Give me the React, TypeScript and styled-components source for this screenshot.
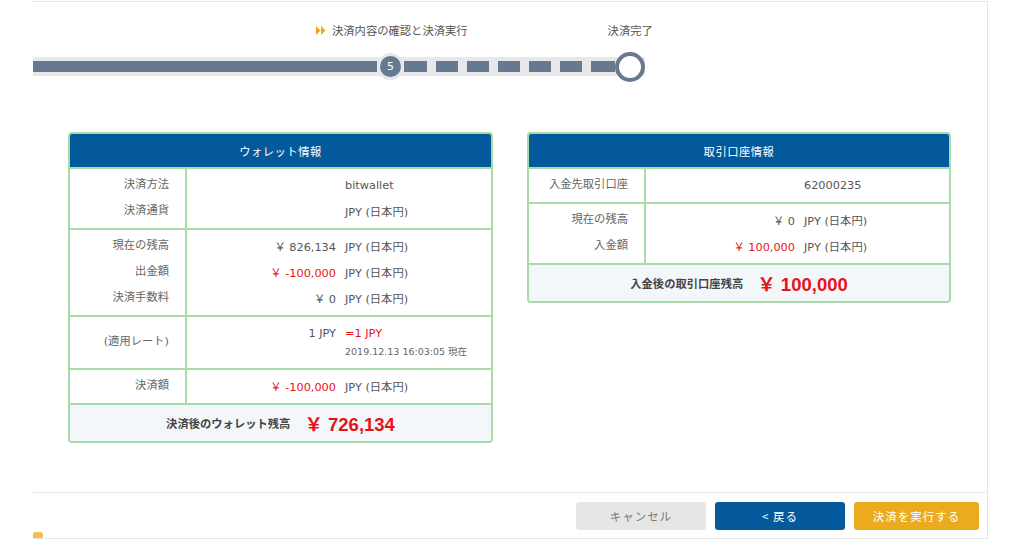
import styled, { createGlobalStyle } from "styled-components";

const GlobalStyle = createGlobalStyle`
    html, body {
        margin: 0;
        padding: 0;
        background: #ffffff;
    }
    body {
        font-family: "DejaVu Sans", "Noto Sans CJK JP", sans-serif;
        color: #555;
    }
`;

type Line = { amount?: string; unit: string; red?: boolean; unitRed?: boolean; note?: string };
type Section = { label: string[]; lines: Line[]; rate?: boolean };

const walletSections: Section[] = [
    {
        label: ["決済方法", "決済通貨"],
        lines: [{ unit: "bitwallet" }, { unit: "JPY (日本円)" }],
    },
    {
        label: ["現在の残高", "出金額", "決済手数料"],
        lines: [
            { amount: "￥ 826,134", unit: "JPY (日本円)" },
            { amount: "￥ -100,000", unit: "JPY (日本円)", red: true },
            { amount: "￥ 0", unit: "JPY (日本円)" },
        ],
    },
    {
        label: ["(適用レート)"],
        rate: true,
        lines: [{ amount: "1 JPY", unit: "=1 JPY", unitRed: true, note: "2019.12.13 16:03:05 現在" }],
    },
    {
        label: ["決済額"],
        lines: [{ amount: "￥ -100,000", unit: "JPY (日本円)", red: true }],
    },
];

const accountSections: Section[] = [
    {
        label: ["入金先取引口座"],
        lines: [{ unit: "62000235" }],
    },
    {
        label: ["現在の残高", "入金額"],
        lines: [
            { amount: "￥ 0", unit: "JPY (日本円)" },
            { amount: "￥ 100,000", unit: "JPY (日本円)", red: true },
        ],
    },
];

function InfoCard({
    title,
    sections,
    totalLabel,
    total,
    width,
}: {
    title: string;
    sections: Section[];
    totalLabel: string;
    total: string;
    width: number;
}) {
    return (
        <Card $width={width}>
            <CardHeader>{title}</CardHeader>
            {sections.map((s, i) => (
                <SectionRow key={i}>
                    <LabelCol $center={!!s.rate}>
                        {s.label.map((l) => (
                            <LabelText key={l}>{l}</LabelText>
                        ))}
                    </LabelCol>
                    <ValueCol>
                        {s.lines.map((line, j) =>
                            line.note ? (
                                <RateBlock key={j}>
                                    <ValueLine $h={22}>
                                        <Amount $red={line.red}>{line.amount}</Amount>
                                        <Unit $red={line.unitRed}>{line.unit}</Unit>
                                    </ValueLine>
                                    <NoteLine>{line.note}</NoteLine>
                                </RateBlock>
                            ) : (
                                <ValueLine key={j} $h={26}>
                                    <Amount $red={line.red}>{line.amount ?? ""}</Amount>
                                    <Unit $red={line.unitRed}>{line.unit}</Unit>
                                </ValueLine>
                            )
                        )}
                    </ValueCol>
                </SectionRow>
            ))}
            <TotalRow>
                <TotalLabel>{totalLabel}</TotalLabel>
                <TotalAmount>{total}</TotalAmount>
            </TotalRow>
        </Card>
    );
}

export default function App() {
    return (
        <>
            <GlobalStyle />
            <Page>
                <Panel>
                    <Stepper>
                        <StepLabels>
                            <StepLabel $ml={283}>
                                <svg width="10" height="9" viewBox="0 0 10 9">
                                    <polygon points="0,0 4.5,4.5 0,9" fill="#f0a81a" />
                                    <polygon points="5,0 9.5,4.5 5,9" fill="#f0a81a" />
                                </svg>
                                決済内容の確認と決済実行
                            </StepLabel>
                            <StepLabel $ml={140}>決済完了</StepLabel>
                        </StepLabels>
                        <Track>
                            <Solid />
                            <Dot>5</Dot>
                            <Dash $w={23} $ml={0} />
                            <Dash $w={22} $ml={9} />
                            <Dash $w={22} $ml={9} />
                            <Dash $w={22} $ml={9} />
                            <Dash $w={22} $ml={9} />
                            <Dash $w={22} $ml={9} />
                            <Dash $w={24} $ml={9} />
                            <EndCircle />
                        </Track>
                    </Stepper>

                    <Cards>
                        <InfoCard
                            title="ウォレット情報"
                            sections={walletSections}
                            totalLabel="決済後のウォレット残高"
                            total="￥ 726,134"
                            width={425}
                        />
                        <InfoCard
                            title="取引口座情報"
                            sections={accountSections}
                            totalLabel="入金後の取引口座残高"
                            total="￥ 100,000"
                            width={424}
                        />
                    </Cards>

                    <Footer>
                        <Button $variant="cancel">キャンセル</Button>
                        <Button $variant="back">&lt; 戻る</Button>
                        <Button $variant="run" $w={125}>
                            決済を実行する
                        </Button>
                    </Footer>
                    <YellowTab />
                </Panel>
            </Page>
        </>
    );
}

// style
const Page = styled.div`
    padding: 1px 0 0 33px;
    width: 1024px;
    height: 546px;
    box-sizing: border-box;
    overflow: hidden;
`;

const Panel = styled.div`
    position: relative;
    width: 955px;
    height: 538px;
    box-sizing: border-box;
    border-top: 1px solid #e6e6e6;
    border-right: 1px solid #e6e6e6;
    border-bottom: 1px solid #e6e6e6;
    display: flex;
    flex-direction: column;
`;

const Stepper = styled.div`
    padding-top: 20px;
`;

const StepLabels = styled.div`
    display: flex;
    height: 16px;
    align-items: center;
    margin-bottom: 19px;
`;

const StepLabel = styled.div<{ $ml: number }>`
    margin-left: ${(p) => p.$ml}px;
    display: flex;
    align-items: center;
    gap: 6px;
    font-size: 11.3px;
    color: #555;
    white-space: nowrap;
`;

const Track = styled.div`
    display: flex;
    align-items: center;
    width: 612px;
    height: 19px;
    background: #e8e8e8;
`;

const Solid = styled.div`
    width: 344px;
    height: 11px;
    background: #677990;
`;

const Dot = styled.div`
    width: 21px;
    height: 21px;
    border: 3px solid #e8e8e8;
    border-radius: 50%;
    background: #677990;
    color: #fff;
    font-size: 11px;
    display: flex;
    align-items: center;
    justify-content: center;
    flex-shrink: 0;
    position: relative;
    z-index: 1;
`;

const Dash = styled.div<{ $w: number; $ml: number }>`
    width: ${(p) => p.$w}px;
    margin-left: ${(p) => p.$ml}px;
    height: 11px;
    background: #677990;
    flex-shrink: 0;
`;

const EndCircle = styled.div`
    width: 22px;
    height: 22px;
    border: 4px solid #677990;
    border-radius: 50%;
    background: #fff;
    flex-shrink: 0;
`;

const Cards = styled.div`
    display: flex;
    align-items: flex-start;
    gap: 34px;
    margin-top: 56px;
    padding-left: 35px;
`;

const Card = styled.div<{ $width: number }>`
    width: ${(p) => p.$width}px;
    box-sizing: border-box;
    border: 2px solid #a9dba9;
    border-radius: 4px;
    overflow: hidden;
    background: #fff;
`;

const CardHeader = styled.div`
    height: 33px;
    background: #03599b;
    color: #fff;
    font-size: 11.3px;
    display: flex;
    align-items: center;
    justify-content: center;
    letter-spacing: 0.5px;
`;

const SectionRow = styled.div`
    display: flex;
    border-top: 2px solid #a9dba9;
`;

const LabelCol = styled.div<{ $center: boolean }>`
    width: 117px;
    flex-shrink: 0;
    box-sizing: border-box;
    border-right: 2px solid #a9dba9;
    padding: 3px 16px 4px 0;
    display: flex;
    flex-direction: column;
    justify-content: ${(p) => (p.$center ? "center" : "flex-start")};
    align-items: flex-end;
`;

const LabelText = styled.div`
    height: 26px;
    line-height: 26px;
    font-size: 11.3px;
    color: #666;
    white-space: nowrap;
`;

const ValueCol = styled.div`
    flex: 1;
    padding: 3px 0 4px;
`;

const RateBlock = styled.div`
    padding: 2px 0 4px;
`;

const ValueLine = styled.div<{ $h: number }>`
    display: flex;
    align-items: center;
    height: ${(p) => p.$h}px;
    font-size: 11.3px;
    white-space: nowrap;
`;

const Amount = styled.div<{ $red?: boolean }>`
    width: 149px;
    text-align: right;
    color: ${(p) => (p.$red ? "#e8121a" : "#555")};
`;

const Unit = styled.div<{ $red?: boolean }>`
    margin-left: 9px;
    color: ${(p) => (p.$red ? "#e8121a" : "#555")};
`;

const NoteLine = styled.div`
    margin-left: 158px;
    height: 16px;
    line-height: 16px;
    font-size: 9.5px;
    color: #666;
    white-space: nowrap;
`;

const TotalRow = styled.div`
    border-top: 2px solid #a9dba9;
    background: #f3f7fa;
    height: 36px;
    display: flex;
    align-items: center;
    justify-content: center;
    gap: 14px;
`;

const TotalLabel = styled.div`
    font-size: 11.3px;
    font-weight: bold;
    color: #444;
`;

const TotalAmount = styled.div`
    font-family: "Liberation Sans", "Noto Sans CJK JP", sans-serif;
    font-size: 18.5px;
    font-weight: bold;
    color: #e8121a;
`;

const Footer = styled.div`
    margin-top: auto;
    border-top: 1px solid #e6e6e6;
    display: flex;
    justify-content: flex-end;
    gap: 9px;
    padding: 9px 8px 8px 0;
`;

const buttonColors = {
    cancel: { bg: "#e6e6e6", fg: "#777" },
    back: { bg: "#03599b", fg: "#fff" },
    run: { bg: "#ebab1f", fg: "#fff" },
};

const Button = styled.button<{ $variant: "cancel" | "back" | "run"; $w?: number }>`
    width: ${(p) => p.$w ?? 130}px;
    height: 28px;
    border: 0;
    border-radius: 3px;
    background: ${(p) => buttonColors[p.$variant].bg};
    color: ${(p) => buttonColors[p.$variant].fg};
    font-family: "Noto Sans CJK JP", sans-serif;
    font-size: 11.5px;
    letter-spacing: 1px;
    cursor: pointer;
`;

const YellowTab = styled.div`
    position: absolute;
    left: 0;
    bottom: 0;
    width: 10px;
    height: 6px;
    background: #f3c04c;
    border-radius: 2px 3px 0 0;
`;
